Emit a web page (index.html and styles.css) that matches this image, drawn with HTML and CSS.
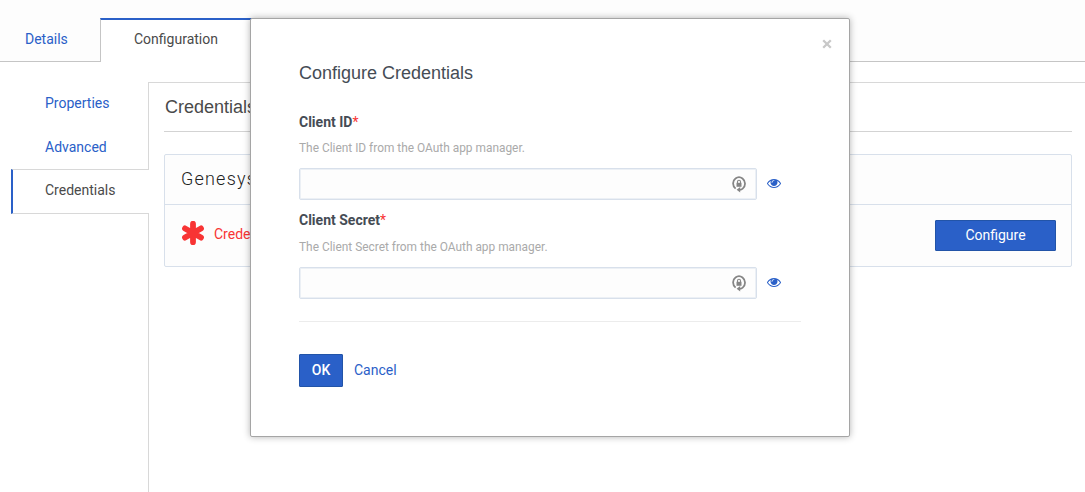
FILE: index.html
```html
<!DOCTYPE html>
<html lang="en">
<head>
<meta charset="utf-8">
<title>Configuration</title>
<link rel="stylesheet" href="styles.css">
</head>
<body>
<svg class="sprite" aria-hidden="true">
  <symbol id="eye" viewBox="0 0 1792 1792"><path d="M1664 960q-152-236-381-353 61 104 61 225 0 185-131.500 316.500t-316.500 131.500-316.500-131.500-131.500-316.500q0-121 61-225-229 117-381 353 133 205 333.500 326.500t434.500 121.500 434.500-121.500 333.500-326.500zm-720-384q0-20-14-34t-34-14q-125 0-214.500 89.500t-89.500 214.500q0 20 14 34t34 14 34-14 14-34q0-86 61-147t147-61q20 0 34-14t14-34zm848 384q0 34-20 69-140 230-376.500 368.500t-499.500 138.500-499.500-139-376.500-368q-20-35-20-69t20-69q140-229 376.500-368t499.500-139 499.500 139 376.500 368q20 35 20 69z"/></symbol>
  <symbol id="lock" viewBox="0 0 14 17"><path d="M3.600 12.600C.2 9.800.4 4.700 3.500 2.500c2-1.500 5-1.500 7 0 3.300 2.500 3.300 7.600.2 10.100-.8.700-1.800 1.100-3 1.200" fill="none" stroke="currentColor" stroke-width="1.800"/><path d="M8.200 11v5.600L4.600 13.800z"/><path d="M4.500 6.800h5v4h-5z"/><path d="M5.500 7V5.800a1.500 1.500 0 0 1 3 0V7" fill="none" stroke="currentColor" stroke-width="1.100"/></symbol>
</svg>

<nav class="tabs">
  <a class="tab tab-details">Details</a>
  <a class="tab tab-active">Configuration</a>
  <span class="tabs-rest"></span>
</nav>

<div class="layout">
  <nav class="side">
    <a class="side-item">Properties</a>
    <a class="side-item side-advanced">Advanced</a>
    <a class="side-item side-active">Credentials</a>
    <span class="side-rest"></span>
  </nav>
  <main class="panel">
    <h1 class="panel-title">Credentials</h1>
    <section class="card">
      <h2 class="card-title">Genesys</h2>
      <div class="card-row">
        <svg class="asterisk" viewBox="0 0 24 24"><path d="M12 2.700v18.600M4 7.400l16 9.200M4 16.600l16-9.200"/></svg>
        <span class="status">Credentials</span>
        <button class="configure">Configure</button>
      </div>
    </section>
  </main>
</div>

<div class="modal" role="dialog">
  <svg class="close" viewBox="0 0 10 10"><path d="M1.200 1.200l7.600 7.600M8.800 1.200L1.200 8.800"/></svg>
  <h2 class="modal-title">Configure Credentials</h2>
  <div class="field">
    <label class="label">Client ID<span class="required">*</span></label>
    <p class="hint">The Client ID from the OAuth app manager.</p>
    <div class="control">
      <div class="input"><svg class="lock"><use href="#lock"/></svg></div>
      <svg class="eye"><use href="#eye"/></svg>
    </div>
  </div>
  <div class="field field-last">
    <label class="label">Client Secret<span class="required">*</span></label>
    <p class="hint">The Client Secret from the OAuth app manager.</p>
    <div class="control">
      <div class="input"><svg class="lock"><use href="#lock"/></svg></div>
      <svg class="eye"><use href="#eye"/></svg>
    </div>
  </div>
  <div class="actions">
    <button class="ok">OK</button>
    <a class="cancel">Cancel</a>
  </div>
</div>
</body>
</html>
```
FILE: styles.css
```css
* { box-sizing: border-box; }
body {
  margin: 0;
  height: 492px;
  overflow: hidden;
  display: flex;
  flex-direction: column;
  background: #fff;
  color: #4a4a4a;
  font: 14px/20px Roboto, sans-serif;
}
h1, h2, p { margin: 0; font-weight: 400; }
button { font-family: inherit; padding: 0; }
.sprite { display: none; }

.tabs { display: flex; height: 62px; background: #fdfdfd; }
.tab { color: #2a60c8; }
.tab-details { width: 100px; padding: 29px 0 0 25px; border-bottom: 1px solid #c5c5c5; }
.tab-active {
  width: 152px;
  margin-top: 18px;
  padding: 9px 0 0 33px;
  border-left: 1px solid #c5c5c5;
  border-top: 2px solid #2a60c8;
  background: #fff;
  color: #4a4a4a;
}
.tabs-rest { flex: 1; border-bottom: 1px solid #c5c5c5; }

.layout { display: flex; flex: 1; padding-top: 20px; }
.side { width: 149px; padding-left: 11px; display: flex; flex-direction: column; }
.side-item {
  height: 44px;
  padding: 11px 0 0 34px;
  border-right: 1px solid #d8d8d8;
  color: #2a60c8;
}
.side-advanced { height: 43px; }
.side-active {
  height: 45px;
  padding: 10px 0 0 32px;
  border: solid #d8d8d8;
  border-width: 1px 0;
  border-left: 2px solid #2a60c8;
  color: #4a4a4a;
}
.side-rest { flex: 1; border-right: 1px solid #d8d8d8; }

.panel { flex: 1; padding: 0 13px 0 15px; border-top: 1px solid #d8d8d8; }
.panel-title {
  height: 49px;
  padding: 14px 0 0 1px;
  border-bottom: 1px solid #d3d3d3;
  font: 18px/20px "Liberation Sans", Arial, sans-serif;
}
.card { margin-top: 22px; height: 113px; border: 1px solid #d8e0eb; border-radius: 2px; background: #fdfdfd; }
.card-title {
  height: 50px;
  padding: 14px 16px 0;
  border-bottom: 1px solid #d8e0eb;
  font-size: 18px;
  font-weight: 300;
  letter-spacing: 1.2px;
  color: #222;
}
.card-row { display: flex; align-items: center; height: 61px; padding: 0 15px 0 16px; }
.asterisk { width: 24px; height: 24px; margin-top: -5px; fill: none; stroke: #f83434; stroke-width: 5.800; stroke-linecap: round; }
.status { margin: -3px 0 0 9px; color: #f83434; }
.configure {
  width: 121px;
  height: 31px;
  margin-left: auto;
  padding-bottom: 2px;
  border: 1px solid #2254a8;
  border-radius: 1px;
  background: #2a60c8;
  color: #fff;
  font-size: 14px;
}

.modal {
  position: absolute;
  left: 250px;
  top: 18px;
  width: 600px;
  height: 419px;
  padding: 44px 48px 0;
  border: 1px solid #a5a5a5;
  border-radius: 2px;
  background: #fff;
  box-shadow: 0 0 7px rgba(0, 0, 0, .3);
  color: #454c55;
}
.close { position: absolute; left: 571px; top: 20px; width: 10px; height: 10px; fill: none; stroke: #c8c8c8; stroke-width: 2.300; }
.modal-title { height: 49px; font: 18px/20px "Liberation Sans", Arial, sans-serif; }
.field { height: 98px; }
.field-last { height: 112px; border-bottom: 1px solid #ececec; }
.label { display: block; font-weight: 700; }
.required { color: #f83434; font-weight: 400; }
.hint { height: 20px; margin-top: 7px; font-size: 11.900px; line-height: 18px; color: #aaa; }
.field-last .hint { margin-top: 8px; }
.control { display: flex; align-items: center; margin-top: 9px; }
.input {
  display: flex;
  align-items: center;
  justify-content: flex-end;
  width: 458px;
  height: 32px;
  padding-right: 10px;
  border: 1px solid #d8e0eb;
  border-radius: 2px;
  background: #fdfdfd;
  box-shadow: inset 0 0 0 1px #ecf0f5;
}
.lock { width: 14px; height: 17px; color: #858585; fill: currentColor; }
.eye { width: 14px; height: 14px; margin: 0 0 2px 10px; fill: #2a60c8; }
.actions { display: flex; align-items: center; gap: 11px; padding-top: 32px; }
.ok {
  width: 44px;
  height: 33px;
  padding-bottom: 2px;
  border: 1px solid #2254a8;
  border-radius: 1px;
  background: #2a60c8;
  color: #fff;
  font-size: 14px;
  font-weight: 500;
}
.cancel { padding-bottom: 1px; color: #2a60c8; }
```
